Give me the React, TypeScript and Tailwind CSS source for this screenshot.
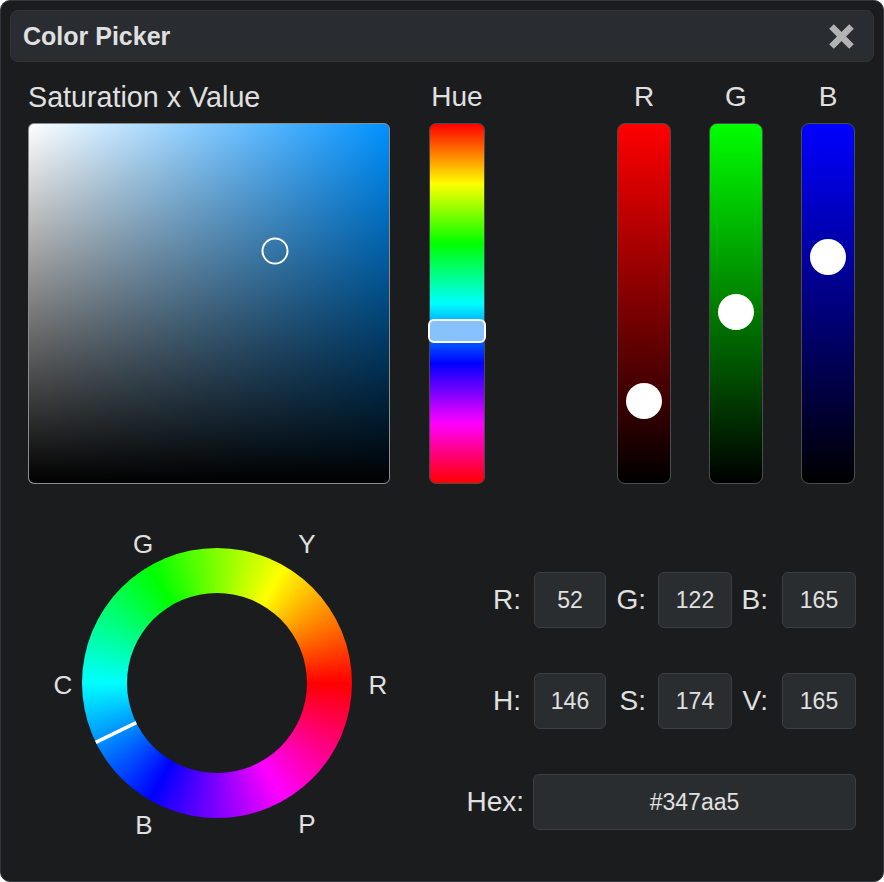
import React from 'react';

const rgb = { r: 52, g: 122, b: 165 };
const hsv = { h: 146, s: 174, v: 165 };

// vertical slider thumb, range inset by thumb radius
const thumbTop = (v: number) => 18 + (1 - v / 255) * 325;

const ChannelBar: React.FC<{ label: string; value: number; gradient: string; className?: string }> = ({
  label,
  value,
  gradient,
  className,
}) => (
  <div className={`flex flex-col items-center w-[54px] ${className ?? ''}`}>
    <div className="h-[32px] leading-[32px] text-[28px] mb-[10px]">{label}</div>
    <div className={`relative w-[54px] h-[361px] rounded-[8px] border border-[#4a4c4f] ${gradient}`}>
      <div
        className="absolute left-1/2 w-[36px] h-[36px] -translate-x-1/2 -translate-y-1/2 rounded-full bg-white"
        style={{ top: thumbTop(value) }}
      />
    </div>
  </div>
);

const Field: React.FC<{ label: string; value: string | number; labelW: string; pr: string; boxW: string }> = ({
  label,
  value,
  labelW,
  pr,
  boxW,
}) => (
  <>
    <span className={`${labelW} ${pr} text-right text-[28px] leading-[32px]`}>{label}</span>
    <div
      className={`${boxW} h-[56px] flex items-center justify-center rounded-[6px] bg-[#2a2d30] border border-[#3b3e42] text-[23px]`}
    >
      {value}
    </div>
  </>
);

const wheelLabels = [
  { t: 'G', x: 103, y: 24 },
  { t: 'Y', x: 267, y: 24 },
  { t: 'C', x: 23, y: 165 },
  { t: 'R', x: 338, y: 165 },
  { t: 'B', x: 104, y: 305 },
  { t: 'P', x: 267, y: 304 },
];

export default function App() {
  const hueDeg = (hsv.h / 255) * 360;
  const rad = (hueDeg * Math.PI) / 180;
  const cx = 177;
  const cy = 163;
  const p1 = { x: cx + Math.cos(rad) * 90, y: cy - Math.sin(rad) * 90 };
  const p2 = { x: cx + Math.cos(rad) * 135, y: cy - Math.sin(rad) * 135 };

  const svX = (hsv.s / 255) * 360;
  const svY = (1 - hsv.v / 255) * 359;
  const hueY = (hsv.h / 255) * 361;

  const hex = '#' + [rgb.r, rgb.g, rgb.b].map((n) => n.toString(16).padStart(2, '0')).join('');

  return (
    <div className="w-[884px] h-[882px] bg-[#1b1c1e] border border-[#33363a] rounded-[10px] p-[9px] font-['Liberation_Sans',Arial,sans-serif] text-[#e0e0e0]">
      {/* Title bar */}
      <div className="h-[52px] rounded-[8px] bg-[#292c30] border border-[#303337] flex items-center justify-between pl-[12px] pr-[19px]">
        <span className="text-[25px] font-bold leading-none">Color Picker</span>
        <svg width="25" height="25" viewBox="0 0 25 25">
          <line x1="2.5" y1="2.5" x2="22.5" y2="22.5" stroke="#b3b3b3" strokeWidth="6.5" />
          <line x1="22.5" y1="2.5" x2="2.5" y2="22.5" stroke="#b3b3b3" strokeWidth="6.5" />
        </svg>
      </div>

      {/* Top: SV square, hue, RGB channels */}
      <div className="flex mt-[19px]">
        <div className="ml-[18px] w-[362px]">
          <div className="h-[32px] leading-[32px] text-[28.7px] mb-[10px]">Saturation x Value</div>
          <div className="relative h-[361px] rounded-[6px] border border-[#8c8c8c] overflow-hidden bg-[linear-gradient(to_right,#ffffff,#0091ff)]">
            <div className="absolute inset-0 bg-[linear-gradient(to_top,#000000,transparent)]" />
            <div
              className="absolute w-[27px] h-[27px] -translate-x-1/2 -translate-y-1/2 rounded-full border-[2.5px] border-white"
              style={{ left: svX, top: svY }}
            />
          </div>
        </div>

        <div className="ml-[39px] w-[56px] flex flex-col items-center">
          <div className="h-[32px] leading-[32px] text-[28px] mb-[10px]">Hue</div>
          <div className="relative w-[56px] h-[361px] rounded-[7px] border border-[#4a4c4f] bg-[linear-gradient(to_bottom,#ff0000,#ffff00,#00ff00,#00ffff,#0000ff,#ff00ff,#ff0000)]">
            <div
              className="absolute left-[-2px] right-[-2px] h-[24px] -translate-y-1/2 rounded-[6px] border-2 border-white bg-[#88c2fd]"
              style={{ top: hueY }}
            />
          </div>
        </div>

        <ChannelBar label="R" value={rgb.r} gradient="bg-[linear-gradient(to_bottom,#ff0000,#000000)]" className="ml-[132px]" />
        <ChannelBar label="G" value={rgb.g} gradient="bg-[linear-gradient(to_bottom,#00ff00,#000000)]" className="ml-[38px]" />
        <ChannelBar label="B" value={rgb.b} gradient="bg-[linear-gradient(to_bottom,#0000ff,#000000)]" className="ml-[38px]" />
      </div>

      {/* Bottom: hue wheel and numeric fields */}
      <div className="flex mt-[36px]">
        <div className="relative ml-[30px] w-[360px] h-[330px]">
          <div className="absolute left-[42px] top-[28px] w-[270px] h-[270px] rounded-full bg-[conic-gradient(from_90deg,#ff0000,#ff00ff,#0000ff,#00ffff,#00ff00,#ffff00,#ff0000)]">
            <div className="absolute inset-[45px] rounded-full bg-[#1b1c1e]" />
          </div>
          <svg className="absolute inset-0" width="360" height="330">
            <line x1={p1.x} y1={p1.y} x2={p2.x} y2={p2.y} stroke="#ffffff" strokeWidth="3.5" />
          </svg>
          {wheelLabels.map((l) => (
            <div
              key={l.t}
              className="absolute w-[40px] h-[30px] -translate-x-1/2 -translate-y-1/2 flex items-center justify-center text-[26px]"
              style={{ left: l.x, top: l.y }}
            >
              {l.t}
            </div>
          ))}
        </div>

        <div className="flex-1 flex flex-col items-end gap-[45px] pt-[52px] pr-[18px]">
          <div className="flex items-center">
            <Field label="R:" value={rgb.r} labelW="w-[64px]" pr="pr-[13px]" boxW="w-[72px]" />
            <Field label="G:" value={rgb.g} labelW="w-[52px]" pr="pr-[12px]" boxW="w-[74px]" />
            <Field label="B:" value={rgb.b} labelW="w-[50px]" pr="pr-[14px]" boxW="w-[74px]" />
          </div>
          <div className="flex items-center">
            <Field label="H:" value={hsv.h} labelW="w-[64px]" pr="pr-[13px]" boxW="w-[72px]" />
            <Field label="S:" value={hsv.s} labelW="w-[52px]" pr="pr-[12px]" boxW="w-[74px]" />
            <Field label="V:" value={hsv.v} labelW="w-[50px]" pr="pr-[14px]" boxW="w-[74px]" />
          </div>
          <div className="flex items-center">
            <Field label="Hex:" value={hex} labelW="w-[68px]" pr="pr-[9px]" boxW="w-[323px]" />
          </div>
        </div>
      </div>
    </div>
  );
}
